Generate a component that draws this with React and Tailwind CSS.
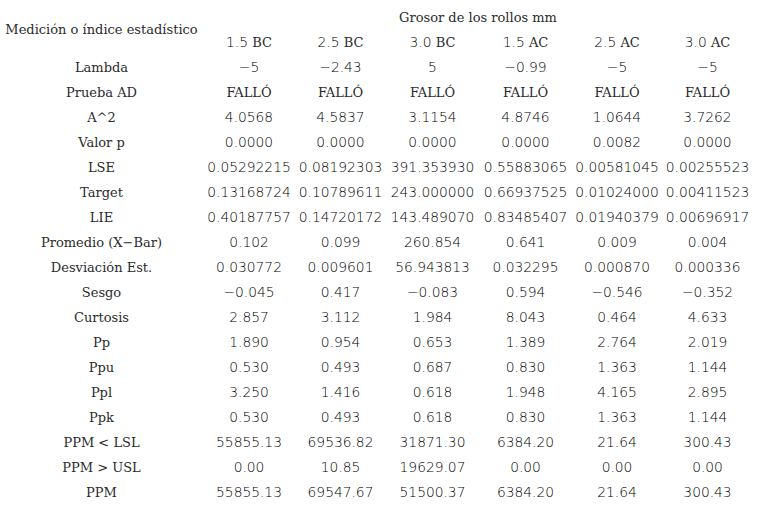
import React from "react";

const cols = [
  ["1.5", "BC"],
  ["2.5", "BC"],
  ["3.0", "BC"],
  ["1.5", "AC"],
  ["2.5", "AC"],
  ["3.0", "AC"],
];

const rows = [
  ["Lambda", "\u22125", "\u22122.43", "5", "\u22120.99", "\u22125", "\u22125"],
  ["Prueba AD", "FALLÓ", "FALLÓ", "FALLÓ", "FALLÓ", "FALLÓ", "FALLÓ"],
  ["A^2", "4.0568", "4.5837", "3.1154", "4.8746", "1.0644", "3.7262"],
  ["Valor p", "0.0000", "0.0000", "0.0000", "0.0000", "0.0082", "0.0000"],
  ["LSE", "0.05292215", "0.08192303", "391.353930", "0.55883065", "0.00581045", "0.00255523"],
  ["Target", "0.13168724", "0.10789611", "243.000000", "0.66937525", "0.01024000", "0.00411523"],
  ["LIE", "0.40187757", "0.14720172", "143.489070", "0.83485407", "0.01940379", "0.00696917"],
  ["Promedio (X\u2212Bar)", "0.102", "0.099", "260.854", "0.641", "0.009", "0.004"],
  ["Desviación Est.", "0.030772", "0.009601", "56.943813", "0.032295", "0.000870", "0.000336"],
  ["Sesgo", "\u22120.045", "0.417", "\u22120.083", "0.594", "\u22120.546", "\u22120.352"],
  ["Curtosis", "2.857", "3.112", "1.984", "8.043", "0.464", "4.633"],
  ["Pp", "1.890", "0.954", "0.653", "1.389", "2.764", "2.019"],
  ["Ppu", "0.530", "0.493", "0.687", "0.830", "1.363", "1.144"],
  ["Ppl", "3.250", "1.416", "0.618", "1.948", "4.165", "2.895"],
  ["Ppk", "0.530", "0.493", "0.618", "0.830", "1.363", "1.144"],
  ["PPM < LSL", "55855.13", "69536.82", "31871.30", "6384.20", "21.64", "300.43"],
  ["PPM > USL", "0.00", "10.85", "19629.07", "0.00", "0.00", "0.00"],
  ["PPM", "55855.13", "69547.67", "51500.37", "6384.20", "21.64", "300.43"],
];

const grid = "grid grid-cols-[203px_92px_91px_93px_93px_90px_91px]";
const num = "font-['DejaVu_Sans',sans-serif] font-extralight text-[13.8px] text-black";

export default function App() {
  return (
    <div
      className="w-[765px] h-[508px] bg-white text-[#2b2b2b] text-[13px] leading-[25px] pt-[4px] overflow-hidden"
      style={{ fontFamily: '"DejaVu Serif", serif' }}
    >
      <div className={`${grid} grid-rows-[26px_25px]`}>
        <div className="row-span-2 flex items-center justify-center whitespace-nowrap">
          Medición o índice estadístico
        </div>
        <div className="col-span-6 flex items-center justify-center whitespace-nowrap">
          Grosor de los rollos mm
        </div>
        {cols.map((c, i) => (
          <div key={i} className="text-center whitespace-nowrap">
            <span className={num}>{c[0]}</span> {c[1]}
          </div>
        ))}
      </div>
      {rows.map((r) => (
        <div key={r[0]} className={`${grid} h-[25px]`}>
          {r.map((v, i) =>
            i === 0 || v === "FALLÓ" ? (
              <div key={i} className="text-center whitespace-nowrap">
                {v}
              </div>
            ) : (
              <div key={i} className={`text-center whitespace-nowrap ${num}`}>
                {v}
              </div>
            )
          )}
        </div>
      ))}
    </div>
  );
}
